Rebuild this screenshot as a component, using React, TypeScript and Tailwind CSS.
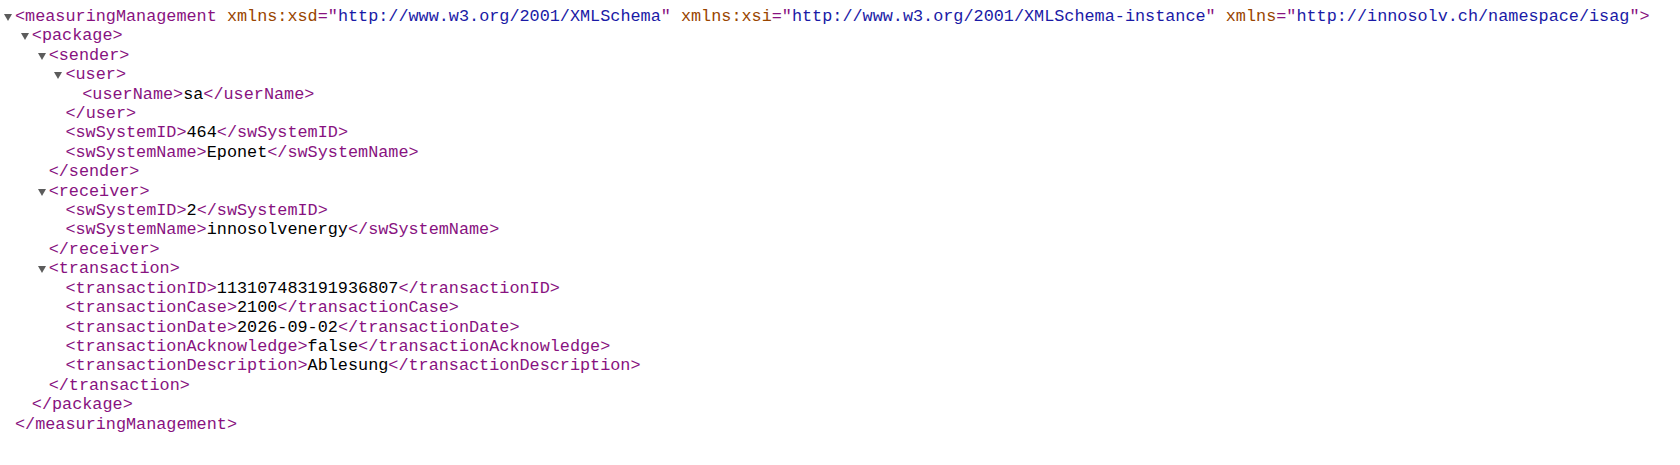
import React from "react";

type XmlNode = {
  tag: string;
  attrs?: [string, string][];
  text?: string;
  children?: XmlNode[];
};

const doc: XmlNode = {
  tag: "measuringManagement",
  attrs: [
    ["xmlns:xsd", "http://www.w3.org/2001/XMLSchema"],
    ["xmlns:xsi", "http://www.w3.org/2001/XMLSchema-instance"],
    ["xmlns", "http://innosolv.ch/namespace/isag"],
  ],
  children: [
    {
      tag: "package",
      children: [
        {
          tag: "sender",
          children: [
            { tag: "user", children: [{ tag: "userName", text: "sa" }] },
            { tag: "swSystemID", text: "464" },
            { tag: "swSystemName", text: "Eponet" },
          ],
        },
        {
          tag: "receiver",
          children: [
            { tag: "swSystemID", text: "2" },
            { tag: "swSystemName", text: "innosolvenergy" },
          ],
        },
        {
          tag: "transaction",
          children: [
            { tag: "transactionID", text: "113107483191936807" },
            { tag: "transactionCase", text: "2100" },
            { tag: "transactionDate", text: "2026-09-02" },
            { tag: "transactionAcknowledge", text: "false" },
            { tag: "transactionDescription", text: "Ablesung" },
          ],
        },
      ],
    },
  ],
};

// collapse arrow, sits in the gutter left of the opening tag
const Fold = () => (
  <span className="inline-block w-[11px] -ml-[11px]">
    <svg width="8" height="7" viewBox="0 0 8 7" className="block">
      <path d="M0 0 L8 0 L4 7 Z" fill="#5c5c5c" />
    </svg>
  </span>
);

const OpenTag = ({ node }: { node: XmlNode }) => (
  <span className="text-[#881280]">
    &lt;{node.tag}
    {node.attrs?.map(([name, value]) => (
      <span key={name}>
        {" "}
        <span className="text-[#994500]">{name}</span>="
        <span className="text-[#1a1aa6]">{value}</span>"
      </span>
    ))}
    &gt;
  </span>
);

const CloseTag = ({ tag }: { tag: string }) => <span className="text-[#881280]">&lt;/{tag}&gt;</span>;

const XmlTree = ({ node }: { node: XmlNode }) => {
  if (!node.children) {
    return (
      <div className="whitespace-pre">
        <OpenTag node={node} />
        <span className="text-black">{node.text}</span>
        <CloseTag tag={node.tag} />
      </div>
    );
  }
  return (
    <div>
      <div className="whitespace-pre">
        <Fold />
        <OpenTag node={node} />
      </div>
      <div className="ml-[1em]">
        {node.children.map((child, i) => (
          <XmlTree key={i} node={child} />
        ))}
      </div>
      <div className="whitespace-pre">
        <CloseTag tag={node.tag} />
      </div>
    </div>
  );
};

export default function App() {
  return (
    <div className="w-[1680px] h-[465px] bg-white overflow-hidden">
      <div className="pt-[7px] pl-[15px] font-['Liberation_Mono',monospace] text-[16.82px] leading-[19.4px]">
        <XmlTree node={doc} />
      </div>
    </div>
  );
}
